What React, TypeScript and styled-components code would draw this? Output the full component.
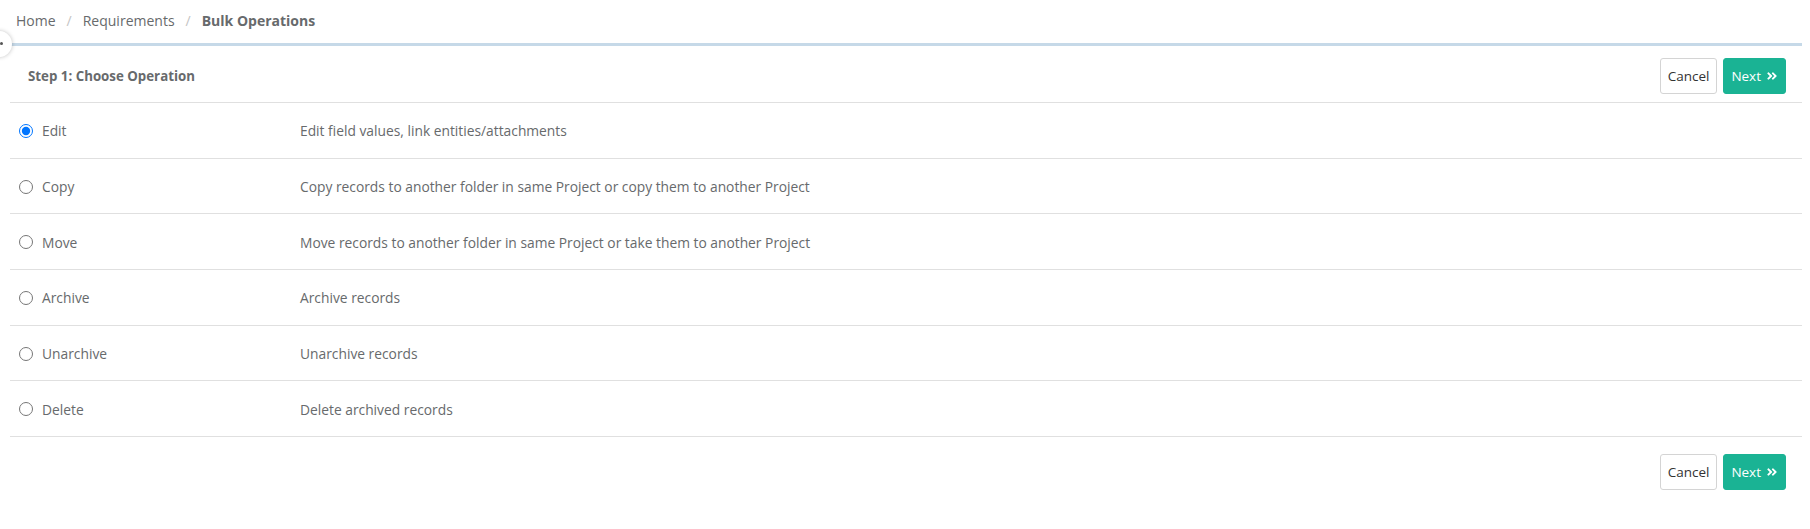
import React, { useState } from 'react'
import styled, { createGlobalStyle } from 'styled-components'
import { FaAngleDoubleRight } from 'react-icons/fa'

const GlobalStyle = createGlobalStyle`
    body {
        margin: 0;
        background: #fff;
        font-family: 'Open Sans', 'Noto Sans', sans-serif;
        font-size: 13.8px;
        color: #676a6c;
    }
`

const Page = styled.div`
    position: relative;
    width: 1810px;
    height: 529px;
    overflow: hidden;
`

const Breadcrumb = styled.nav`
    display: flex;
    align-items: center;
    height: 40px;
    padding-left: 16px;
    font-size: 14px;
`

const Crumb = styled.span<{ $active?: boolean }>`
    color: #676a6c;
    font-weight: ${(p) => (p.$active ? 700 : 400)};
`

const Separator = styled.span`
    color: #c4c4c4;
    padding: 0 11px;
`

const SideToggle = styled.button`
    position: absolute;
    left: -14px;
    top: 31px;
    width: 26px;
    height: 26px;
    border-radius: 50%;
    border: none;
    background: #fff;
    box-shadow: 0 0 4px rgba(0, 0, 0, 0.25);
    padding: 0;

    &::after {
        content: '';
        position: absolute;
        right: 9px;
        top: 11px;
        width: 3px;
        height: 3px;
        border-radius: 50%;
        background: #555;
    }
`

const Panel = styled.section`
    margin: 3px 8px 0 10px;
    border-top: 3px solid #c6d9e8;
`

const PanelHeader = styled.header`
    display: flex;
    align-items: center;
    justify-content: space-between;
    padding: 12px 16px 8px 18px;
    border-bottom: 1px solid #e0e0e0;
`

const Title = styled.h5`
    margin: 0;
    font-size: 13.3px;
    font-weight: 700;
    color: #676a6c;
`

const ButtonGroup = styled.div`
    display: flex;
    gap: 6px;
`

const Button = styled.button<{ $primary?: boolean }>`
    display: inline-flex;
    align-items: center;
    gap: 5px;
    height: 36px;
    padding: 0 7px;
    border-radius: 3px;
    font-family: inherit;
    font-size: 13.5px;
    cursor: pointer;
    border: 1px solid ${(p) => (p.$primary ? '#1ab394' : '#d4d4d4')};
    background: ${(p) => (p.$primary ? '#1ab394' : '#fff')};
    color: ${(p) => (p.$primary ? '#fff' : '#333')};
`

const OptionList = styled.div`
    display: flex;
    flex-direction: column;
`

const OptionRow = styled.label`
    display: grid;
    grid-template-columns: 290px 1fr;
    align-items: center;
    box-sizing: border-box;
    height: 55.7px;
    padding-top: 1px;
    border-bottom: 1px solid #e0e0e0;
    cursor: pointer;
`

const OptionName = styled.span`
    display: flex;
    align-items: center;
    gap: 9px;
    padding-left: 9px;
`

const Radio = styled.input`
    width: 14px;
    height: 14px;
    margin: 0;
    accent-color: #0075ff;
`

const Footer = styled.div`
    display: flex;
    justify-content: flex-end;
    padding: 17px 16px 0 0;
`

const operations = [
    { id: 'edit', name: 'Edit', description: 'Edit field values, link entities/attachments' },
    { id: 'copy', name: 'Copy', description: 'Copy records to another folder in same Project or copy them to another Project' },
    { id: 'move', name: 'Move', description: 'Move records to another folder in same Project or take them to another Project' },
    { id: 'archive', name: 'Archive', description: 'Archive records' },
    { id: 'unarchive', name: 'Unarchive', description: 'Unarchive records' },
    { id: 'delete', name: 'Delete', description: 'Delete archived records' },
]

function Actions() {
    return (
        <ButtonGroup>
            <Button>Cancel</Button>
            <Button $primary>
                Next <FaAngleDoubleRight size={12} />
            </Button>
        </ButtonGroup>
    )
}

export default function App() {
    const [selected, setSelected] = useState('edit')

    return (
        <Page>
            <GlobalStyle />
            <Breadcrumb>
                <Crumb>Home</Crumb>
                <Separator>/</Separator>
                <Crumb>Requirements</Crumb>
                <Separator>/</Separator>
                <Crumb $active>Bulk Operations</Crumb>
            </Breadcrumb>
            <SideToggle aria-label="Toggle sidebar" />
            <Panel>
                <PanelHeader>
                    <Title>Step 1: Choose Operation</Title>
                    <Actions />
                </PanelHeader>
                <OptionList>
                    {operations.map((op) => (
                        <OptionRow key={op.id}>
                            <OptionName>
                                <Radio
                                    type="radio"
                                    name="operation"
                                    checked={selected === op.id}
                                    onChange={() => setSelected(op.id)}
                                />
                                {op.name}
                            </OptionName>
                            <span>{op.description}</span>
                        </OptionRow>
                    ))}
                </OptionList>
                <Footer>
                    <Actions />
                </Footer>
            </Panel>
        </Page>
    )
}
